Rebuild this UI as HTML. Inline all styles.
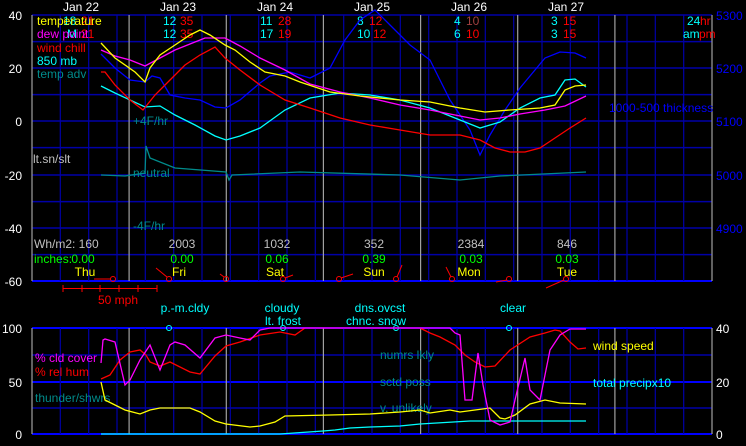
<!DOCTYPE html>
<html><head><meta charset="utf-8"><style>
html,body{margin:0;padding:0;background:#000;}
svg{display:block}
text{font-family:"Liberation Sans",sans-serif;font-size:12px;}
</style></head><body>
<svg width="746" height="446" viewBox="0 0 746 446" xmlns="http://www.w3.org/2000/svg">
<rect width="746" height="446" fill="#000"/>
<g stroke="#0000a8" stroke-width="1.5">
<line x1="32" y1="15" x2="712" y2="15"/><line x1="32" y1="41.6" x2="712" y2="41.6"/>
<line x1="32" y1="68" x2="712" y2="68"/><line x1="32" y1="94.6" x2="712" y2="94.6"/>
<line x1="32" y1="121" x2="712" y2="121"/><line x1="32" y1="147.6" x2="712" y2="147.6"/>
<line x1="32" y1="175" x2="712" y2="175"/><line x1="32" y1="201.6" x2="712" y2="201.6"/>
<line x1="32" y1="228" x2="712" y2="228"/><line x1="32" y1="254.6" x2="712" y2="254.6"/>
<line x1="32" y1="355" x2="712" y2="355"/><line x1="32" y1="408" x2="712" y2="408"/>
</g>
<g stroke="#0000ff" stroke-width="2">
<line x1="32" y1="281" x2="712" y2="281"/>
<line x1="32" y1="328" x2="712" y2="328"/><line x1="32" y1="382" x2="712" y2="382"/><line x1="32" y1="434" x2="712" y2="434"/>
</g>
<g stroke="#0000a8" stroke-width="1.2">
<path d="M60.3 15V281M88.7 15V281M117 15V281M145.3 15V281M173.7 15V281M202 15V281M230.3 15V281M258.7 15V281M287 15V281M315.3 15V281M343.7 15V281M372 15V281M400.3 15V281M428.7 15V281M457 15V281M485.3 15V281M513.7 15V281M542 15V281M570.3 15V281M598.7 15V281M627 15V281M655.3 15V281M683.7 15V281"/>
<path d="M60.3 328V434M88.7 328V434M117 328V434M145.3 328V434M173.7 328V434M202 328V434M230.3 328V434M258.7 328V434M287 328V434M315.3 328V434M343.7 328V434M372 328V434M400.3 328V434M428.7 328V434M457 328V434M485.3 328V434M513.7 328V434M542 328V434M570.3 328V434M598.7 328V434M627 328V434M655.3 328V434M683.7 328V434"/>
</g>
<g stroke="#a0a0a0" stroke-width="1.2">
<path d="M32 15V281M129.1 15V281M226.3 15V281M323.4 15V281M420.6 15V281M517.7 15V281M614.9 15V281M712 15V281"/>
<path d="M32 328V434M129.1 328V434M226.3 328V434M323.4 328V434M420.6 328V434M517.7 328V434M614.9 328V434M712 328V434"/>
</g>
<g fill="#fff" text-anchor="end">
<text x="22" y="20">40</text><text x="22" y="73">20</text><text x="22" y="126">0</text>
<text x="22" y="180">-20</text><text x="22" y="233">-40</text><text x="22" y="286">-60</text>
<text x="22" y="333">100</text><text x="22" y="387">50</text><text x="22" y="439">0</text>
</g>
<g fill="#fff"><text x="716" y="333">40</text><text x="716" y="387">20</text><text x="716" y="439">0</text></g>
<g fill="#0000ff"><text x="716" y="20">5300</text><text x="716" y="73">5200</text><text x="716" y="126">5100</text><text x="716" y="180">5000</text><text x="716" y="233">4900</text></g>
<g fill="#fff" text-anchor="middle">
<text x="81" y="11">Jan 22</text><text x="178" y="11">Jan 23</text><text x="275" y="11">Jan 24</text>
<text x="372" y="11">Jan 25</text><text x="469" y="11">Jan 26</text><text x="566" y="11">Jan 27</text>
</g>
<g>
<text x="63" y="25" fill="#00ffff">18</text><text x="81" y="25" fill="#ff0000">21</text>
<text x="67" y="38" fill="#00ffff">M</text><text x="81" y="38" fill="#ff0000">21</text>
<text x="163" y="25" fill="#00ffff">12</text><text x="180" y="25" fill="#ff0000">35</text>
<text x="163" y="38" fill="#00ffff">12</text><text x="180" y="38" fill="#ff0000">35</text>
<text x="260" y="25" fill="#00ffff">11</text><text x="278" y="25" fill="#ff0000">28</text>
<text x="260" y="38" fill="#00ffff">17</text><text x="278" y="38" fill="#ff0000">19</text>
<text x="357" y="25" fill="#00ffff">8</text><text x="369" y="25" fill="#ff0000">12</text>
<text x="357" y="38" fill="#00ffff">10</text><text x="373" y="38" fill="#ff0000">12</text>
<text x="454" y="25" fill="#00ffff">4</text><text x="466" y="25" fill="#a04040">10</text>
<text x="454" y="38" fill="#00ffff">6</text><text x="466" y="38" fill="#ff0000">10</text>
<text x="551" y="25" fill="#00ffff">3</text><text x="563" y="25" fill="#ff0000">15</text>
<text x="551" y="38" fill="#00ffff">3</text><text x="563" y="38" fill="#ff0000">15</text>
<text x="687" y="25" fill="#00ffff">24</text><text x="700" y="25" fill="#ff0000">hr</text>
<text x="683" y="38" fill="#00ffff">am</text><text x="699" y="38" fill="#ff0000">pm</text>
</g>
<g>
<text x="37" y="25" fill="#ffff00">temperature</text>
<text x="37" y="38" fill="#ff00ff">dew point</text>
<text x="37" y="52" fill="#ff0000">wind chill</text>
<text x="37" y="65" fill="#00ffff">850 mb</text>
<text x="37" y="78" fill="#008b8b">temp adv</text>
<text x="33" y="163" fill="#c0c0c0">lt.sn/slt</text>
<text x="133" y="125" fill="#008b8b">+4F/hr</text>
<text x="133" y="177" fill="#008b8b">neutral</text>
<text x="133" y="230" fill="#008b8b">-4F/hr</text>
<text x="609" y="112" fill="#0000ff">1000-500 thickness</text>
</g>
<g fill="none" stroke-width="1.3">
<polyline stroke="#008b8b" points="101,175 125,176 145,173 146,146 150,158 175,168 226,172 229,180 232,175 300,172 400,175 460,180 500,176 586,172"/>
<polyline stroke="#0000ff" points="101,54 115,68 130,80 145,82 152,76 160,78 170,95 185,98 200,100 215,107 226,108 240,100 260,83 270,76 290,72 310,78 330,68 345,40 360,20 375,10 390,25 410,45 430,60 450,100 470,130 480,155 490,135 505,110 520,88 545,58 560,52 575,53 586,58"/>
<polyline stroke="#00ffff" points="101,86 115,93 130,100 145,107 160,106 175,115 195,125 215,136 226,140 240,136 260,128 285,110 310,98 340,93 370,95 400,100 430,108 460,120 480,128 500,122 520,108 540,98 555,95 565,80 575,79 586,87"/>
<polyline stroke="#ff0000" points="101,72 105,72 115,85 130,100 143,110 155,95 170,80 185,65 200,55 215,47 225,58 240,70 260,85 285,100 310,108 340,118 370,125 400,130 430,135 460,135 480,140 495,148 510,152 525,152 540,148 555,138 570,128 586,118"/>
<polyline stroke="#ff00ff" points="101,50 115,56 130,60 145,66 160,58 175,50 190,44 205,38 225,38 240,46 260,58 285,70 310,84 340,92 370,98 400,105 430,110 460,116 480,120 500,118 520,114 545,110 565,106 586,96"/>
<polyline stroke="#ffff00" points="101,43 115,58 135,72 145,82 150,68 160,55 175,45 190,35 200,30 210,35 225,45 235,50 250,62 265,72 285,76 300,82 330,92 360,96 400,100 430,102 460,108 485,112 510,110 540,108 555,105 565,90 575,86 586,85"/>
</g>
<g fill="#c0c0c0"><text x="34" y="248">Wh/m2: 160</text>
<text x="182" y="248" text-anchor="middle">2003</text><text x="277" y="248" text-anchor="middle">1032</text>
<text x="374" y="248" text-anchor="middle">352</text><text x="471" y="248" text-anchor="middle">2384</text><text x="567" y="248" text-anchor="middle">846</text></g>
<g fill="#00ff00"><text x="34" y="263">inches:</text><text x="83" y="263" text-anchor="middle">0.00</text>
<text x="182" y="263" text-anchor="middle">0.00</text><text x="277" y="263" text-anchor="middle">0.06</text>
<text x="374" y="263" text-anchor="middle">0.39</text><text x="471" y="263" text-anchor="middle">0.03</text><text x="567" y="263" text-anchor="middle">0.03</text></g>
<g fill="#ffff00" text-anchor="middle"><text x="85" y="276">Thu</text><text x="179" y="276">Fri</text><text x="275" y="276">Sat</text>
<text x="374" y="276">Sun</text><text x="469" y="276">Mon</text><text x="567" y="276">Tue</text></g>
<g stroke="#ff0000" fill="none" stroke-width="1">
<circle cx="113" cy="279" r="2.5"/><line x1="94" y1="279" x2="111" y2="279"/>
<circle cx="169" cy="279" r="2.5"/><line x1="156" y1="268" x2="167" y2="277"/>
<circle cx="226" cy="279" r="2.5"/><line x1="220" y1="274" x2="224" y2="277"/>
<circle cx="283" cy="279" r="2.5"/><line x1="285" y1="278" x2="293" y2="275"/>
<circle cx="339" cy="279" r="2.5"/><line x1="341" y1="278" x2="353" y2="274"/>
<circle cx="396" cy="279" r="2.5"/><line x1="397" y1="277" x2="402" y2="265"/>
<circle cx="452" cy="279" r="2.5"/><line x1="451" y1="277" x2="446" y2="267"/>
<circle cx="509" cy="279" r="2.5"/><line x1="507" y1="280" x2="496" y2="282"/>
<circle cx="566" cy="279" r="2.5"/><line x1="564" y1="280" x2="546" y2="288"/>
<path d="M63 288.5H157M63 285V292M82 285V292M100 285V292M119 285V292M138 285V292M157 285V292"/>
</g>
<text x="98" y="304" fill="#ff0000">50 mph</text>
<g fill="#00ffff" text-anchor="middle">
<text x="185" y="312">p.-m.cldy</text><text x="282" y="312">cloudy</text><text x="283" y="325">lt. frost</text>
<text x="380" y="312">dns.ovcst</text><text x="376" y="325">chnc. snow</text><text x="513" y="312">clear</text>
</g>
<g stroke="#00ffff" fill="none"><circle cx="169" cy="328" r="2.5"/><circle cx="283" cy="328" r="2.5"/><circle cx="396" cy="328" r="2.5"/><circle cx="509" cy="328" r="2.5"/></g>
<g>
<text x="35" y="362" fill="#ff00ff">% cld cover</text>
<text x="35" y="376" fill="#ff0000">% rel hum</text>
<text x="35" y="402" fill="#008b8b">thunder/shwrs</text>
<text x="380" y="359" fill="#008b8b">numrs lkly</text>
<text x="380" y="386" fill="#008b8b">sctd poss</text>
<text x="380" y="412" fill="#008b8b">v. unlikely</text>
<text x="593" y="350" fill="#ffff00">wind speed</text>
<text x="593" y="387" fill="#00ffff">total precipx10</text>
</g>
<g fill="none" stroke-width="1.3">
<polyline stroke="#00ffff" points="101,434 280,434 323,431 335,430 350,428 370,427 400,426 420,424 470,421 586,421"/>
<polyline stroke="#ffff00" points="101,382 105,400 115,405 125,410 140,414 150,410 160,408 190,408 200,412 215,421 226,424 250,427 260,426 275,422 285,416 330,415 370,414 400,412 420,410 430,413 450,410 460,412 475,410 490,408 500,418 505,419 515,415 530,404 545,400 560,403 586,404"/>
<polyline stroke="#ff0000" points="101,379 110,375 120,360 130,352 140,350 146,355 150,362 160,366 170,362 190,372 200,374 215,356 226,346 240,342 260,335 280,332 285,333 295,335 305,328 420,328 430,333 440,337 455,345 465,355 475,362 485,367 495,366 510,350 530,337 545,333 555,330 560,331 570,342 578,349 586,348"/>
<polyline stroke="#ff00ff" points="101,363 103,340 105,339 115,342 125,385 130,380 140,360 150,345 160,370 170,345 175,342 185,345 200,358 215,338 226,335 240,338 250,340 260,330 270,328 450,328 455,333 460,335 465,400 472,400 478,353 483,385 490,420 500,425 510,422 515,400 525,358 530,390 540,400 550,350 560,335 570,329 586,329"/>
</g>
</svg>
</body></html>
